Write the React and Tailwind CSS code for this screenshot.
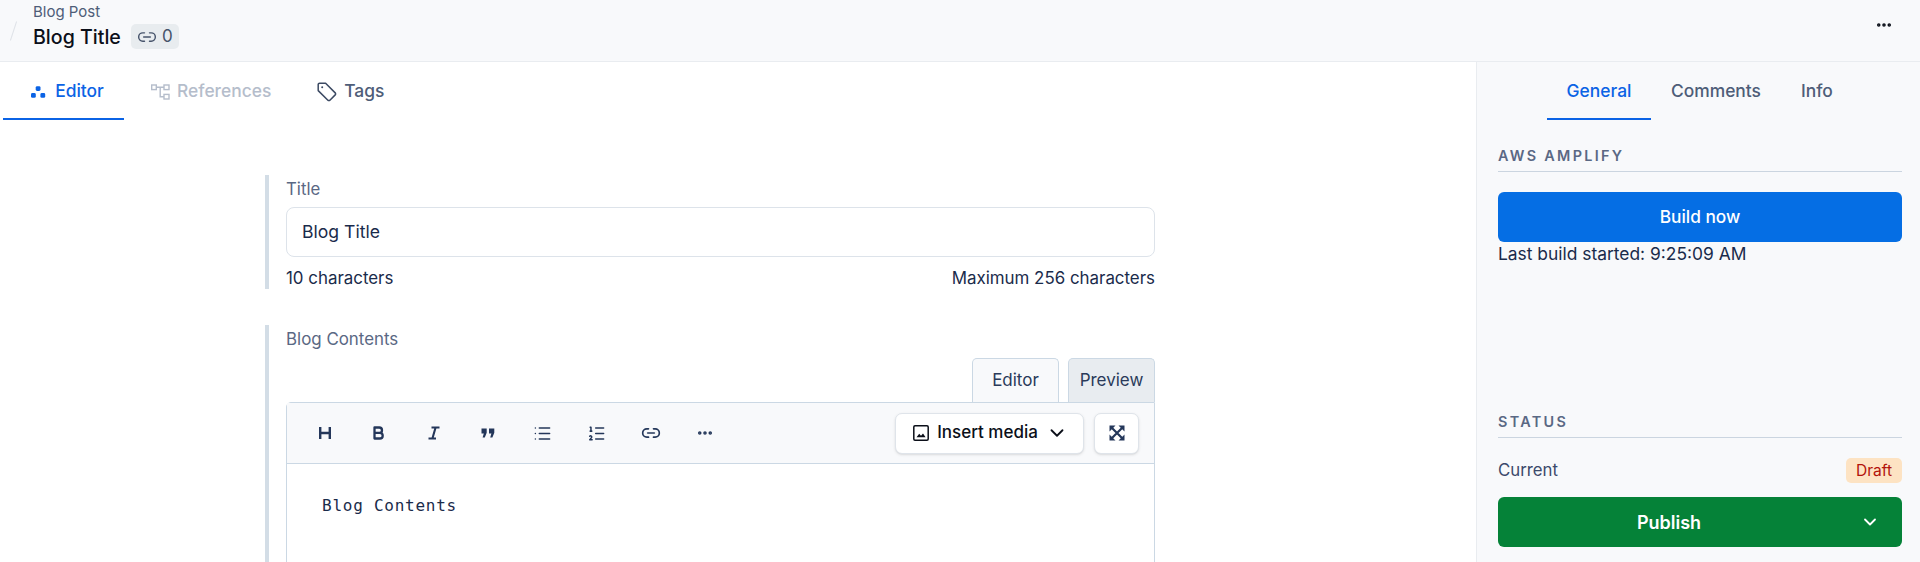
import { ChevronDown, Link2, List, ListOrdered, MoreHorizontal } from 'lucide-react';

const EditorIcon = ({ className }) => (
  <svg viewBox="0 0 16 16" className={className} fill="currentColor">
    <rect x="5.7" y="2.2" width="4.8" height="4.8" rx="1.4" />
    <rect x="1" y="9" width="4.8" height="4.8" rx="1.4" />
    <rect x="10.4" y="9" width="4.8" height="4.8" rx="1.4" />
  </svg>
);

const ReferencesIcon = ({ className }) => (
  <svg viewBox="0 0 19 16" className={className} fill="none" stroke="currentColor" strokeWidth="1.4">
    <rect x="0.7" y="1" width="4.6" height="4.6" />
    <rect x="13" y="1" width="5" height="4.6" />
    <rect x="13" y="10.4" width="5" height="4.6" />
    <path d="M5.3 3.3H13M9.2 3.3V12.7H13" />
  </svg>
);

const TagIcon = ({ className }) => (
  <svg viewBox="0 0 20 20" className={className} fill="none" stroke="currentColor" strokeWidth="1.5" strokeLinejoin="round">
    <path d="M1.2 2.6a1.4 1.4 0 0 1 1.4-1.4h6l9.6 9.7a1.4 1.4 0 0 1 0 2l-5.3 5.3a1.4 1.4 0 0 1-2 0L1.2 8.6z" />
    <circle cx="5.2" cy="5.2" r="1" fill="currentColor" stroke="none" />
  </svg>
);

const HeadingIcon = () => (
  <svg viewBox="0 0 12 14" className="w-[12px] h-[14px]" fill="none" stroke="currentColor" strokeWidth="2.4">
    <path d="M1.2 1v12M10.8 1v12M1.2 7h9.6" />
  </svg>
);

const BoldIcon = () => (
  <svg viewBox="0 0 12 14" className="w-[12px] h-[14px]" fill="none" stroke="currentColor" strokeWidth="2.3" strokeLinejoin="round">
    <path d="M1.5 1.5h4.8a2.7 2.7 0 0 1 0 5.4H1.5zM1.5 6.9h5.4a2.8 2.8 0 0 1 0 5.6H1.5z" />
  </svg>
);

const ItalicIcon = () => (
  <svg viewBox="0 0 12 14" className="w-[12px] h-[14px]" fill="none" stroke="currentColor" strokeWidth="2.1">
    <path d="M3.5 1.5h8M0.5 12.5h7.5M7.6 1.5 4.4 12.5" />
  </svg>
);

const QuoteIcon = () => (
  <svg viewBox="0 0 14 12" className="w-[14px] h-[12px]" fill="currentColor">
    <path d="M0.5 1.5h5.2v4.2L3.8 10.5H1.6l1.2-4H0.5zM8 1.5h5.3v4.2l-1.9 4.8H9.2l1.2-4H8z" />
  </svg>
);

const ImageIcon = () => (
  <svg viewBox="0 0 16 16" className="w-4 h-4" fill="none" stroke="currentColor" strokeWidth="1.5">
    <rect x="0.8" y="0.8" width="14.4" height="14.4" rx="1.2" />
    <path d="M3.5 12.2 6.2 8.8 8 10.8 10 8.5l2.6 3.7z" fill="currentColor" stroke="none" />
  </svg>
);

const ExpandIcon = () => (
  <svg viewBox="0 0 16 16" className="w-4 h-4" fill="none" stroke="currentColor" strokeWidth="2.2">
    <path d="M3 3l10 10M13 3 3 13" />
    <path d="M0.5 6.5V0.5h6zM15.5 6.5V0.5h-6zM0.5 9.5v6h6zM15.5 9.5v6h-6z" fill="currentColor" stroke="none" />
  </svg>
);

const toolbarIcons = [
  <HeadingIcon />,
  <BoldIcon />,
  <ItalicIcon />,
  <QuoteIcon />,
  <List className="w-[19px] h-[19px]" strokeWidth={1.9} />,
  <ListOrdered className="w-[19px] h-[19px]" strokeWidth={1.9} />,
  <Link2 className="w-[20px] h-[20px]" strokeWidth={2} />,
  <MoreHorizontal className="w-[18px] h-[18px]" strokeWidth={2.8} />,
];

const SectionTitle = ({ children }) => (
  <div className="border-b border-[#cbd5e0] pb-[7px] text-[14.4px] leading-4 font-semibold tracking-[0.16em] text-[#5a6884]">
    {children}
  </div>
);

export default function App() {
  return (
    <div className="h-[562px] overflow-hidden bg-white text-[#1a2b4b] font-['Inter',sans-serif]">
      {/* Header */}
      <div className="h-[62px] flex items-center justify-between bg-[#f8f9fb] border-b border-[#e9ecf0] pr-[27px]">
        <div className="flex items-center">
          <div className="w-[1px] h-[20px] ml-[13px] rotate-[18deg] bg-[#dfe3e8]" />
          <div className="ml-[19px]">
            <p className="text-[15px] leading-[17px] text-[#4e5d78] -mt-[9px]">Blog Post</p>
            <div className="flex items-center mt-[4px]">
              <h1 className="text-[19.6px] leading-[24px] font-medium text-[#0b0f19]">Blog Title</h1>
              <span className="ml-[10px] h-[25px] w-[48px] flex items-center justify-center gap-[5px] rounded-[5px] bg-[#e8ecef] text-[17px] text-[#46536b]">
                <Link2 className="w-[20px] h-[20px]" strokeWidth={1.7} />0
              </span>
            </div>
          </div>
        </div>
        <MoreHorizontal className="w-[18px] h-[18px] text-[#0b0f19] -mt-[12px]" strokeWidth={2.8} />
      </div>

      <div className="flex">
        {/* Main column */}
        <div className="flex-1">
          <div className="flex h-[58px] pl-[3px] text-[17.4px] font-medium">
            <div className="w-[121px] border-b-2 border-[#0b63e5] flex items-center justify-center gap-[9px] pl-[7px] pt-[3px] text-[#0b63e5]">
              <EditorIcon className="w-[16px] h-[16px]" />
              Editor
            </div>
            <div className="ml-[27px] flex items-center gap-[7px] pt-[1px] text-[#b5bdcb]">
              <ReferencesIcon className="w-[19px] h-[16px]" />
              References
            </div>
            <div className="ml-[46px] flex items-center gap-[7px] pt-[1px] text-[#4e5d78]">
              <TagIcon className="w-[20px] h-[20px] text-[#3c4a63]" />
              Tags
            </div>
          </div>

          <div className="ml-[265px] w-[890px] mt-[55px]">
            <div className="border-l-4 border-[#d3dde6] pl-[17px] h-[114px]">
              <p className="text-[16.8px] leading-[19px] pt-[5px] text-[#5a6884]">Title</p>
              <div className="mt-[8px] h-[50px] flex items-center border border-[#dde3ea] rounded-[8px] px-[15px] text-[17.6px]">
                Blog Title
              </div>
              <div className="flex justify-between text-[16.9px] leading-[19px] mt-[12px]">
                <span>10 characters</span>
                <span>Maximum 256 characters</span>
              </div>
            </div>

            <div className="mt-[36px] border-l-4 border-[#d3dde6] pl-[17px]">
              <p className="text-[16.9px] leading-[19px] pt-[5px] text-[#5a6884]">Blog Contents</p>
              <div className="flex justify-end gap-[9px] mt-[9px] text-[17px] text-[#2a3a5a]">
                <div className="w-[87px] h-[44px] flex items-center justify-center bg-[#f8f9fb] border border-b-0 border-[#cbd8e4] rounded-t-[5px]">Editor</div>
                <div className="w-[87px] h-[44px] flex items-center justify-center bg-[#e8ecf0] border border-b-0 border-[#cbd8e4] rounded-t-[5px]">Preview</div>
              </div>
              <div className="border border-[#cbd8e4] rounded-tl-[5px] h-[300px]">
                <div className="h-[61px] flex items-center justify-between bg-[#f8f9fb] border-b border-[#cbd8e4] pl-[11px] pr-[15px]">
                  <div className="flex items-center text-[#24375a]">
                    {toolbarIcons.map((icon, index) => (
                      <div key={index} className="w-[54.3px] flex items-center justify-center">
                        {icon}
                      </div>
                    ))}
                  </div>
                  <div className="flex items-center gap-[10px]">
                    <button className="h-[41px] w-[189px] flex items-center justify-center gap-[8px] pl-[2px] bg-white border border-[#dfe4ea] rounded-[7px] text-[17px] font-medium text-[#0b0f19] shadow-sm">
                      <ImageIcon />
                      Insert media
                      <ChevronDown className="w-[22px] h-[22px]" strokeWidth={2} />
                    </button>
                    <button className="h-[41px] w-[45px] flex items-center justify-center bg-white border border-[#dfe4ea] rounded-[7px] text-[#24375a] shadow-sm">
                      <ExpandIcon />
                    </button>
                  </div>
                </div>
                <div className="pl-[35px] pt-[30px] font-['DejaVu_Sans_Mono',monospace] text-[16px] leading-[24px] tracking-[0.75px]">
                  Blog Contents
                </div>
              </div>
            </div>
          </div>
        </div>

        {/* Sidebar */}
        <div className="w-[444px] h-[500px] bg-[#f8f9fb] border-l border-[#e9ecf0] pl-[21px] pr-[18px]">
          <div className="flex h-[58px] text-[17.4px] font-medium pl-[49px]">
            <div className="w-[104px] border-b-2 border-[#0b63e5] flex items-center justify-center pt-[2px] text-[#0b63e5]">General</div>
            <div className="ml-[20px] flex items-center pt-[1px] text-[#4e5d78]">Comments</div>
            <div className="ml-[40px] flex items-center pt-[1px] text-[#4e5d78]">Info</div>
          </div>
          <div className="mt-[28px]">
            <SectionTitle>AWS AMPLIFY</SectionTitle>
          </div>
          <button className="mt-[20px] w-full h-[50px] rounded-[6px] bg-[#056ee4] text-white text-[17.3px] font-medium">Build now</button>
          <p className="mt-[2px] text-[17.4px] leading-[20px]">Last build started: 9:25:09 AM</p>

          <div className="mt-[150px]">
            <SectionTitle>STATUS</SectionTitle>
          </div>
          <div className="mt-[20px] flex items-center justify-between h-[25px]">
            <span className="text-[16.8px] text-[#3c4a6b]">Current</span>
            <span className="h-[25px] w-[56px] flex items-center justify-center rounded-[5px] bg-[#fde3c3] text-[15.6px] text-[#b3140b]">Draft</span>
          </div>
          <button className="relative mt-[14px] w-full h-[50px] rounded-[6px] bg-[#058238] text-white text-[18px] font-semibold">
            <span className="pr-[62px]">Publish</span>
            <ChevronDown className="absolute right-[22px] top-[15px] w-[20px] h-[20px]" strokeWidth={2.2} />
          </button>
        </div>
      </div>
    </div>
  );
}
